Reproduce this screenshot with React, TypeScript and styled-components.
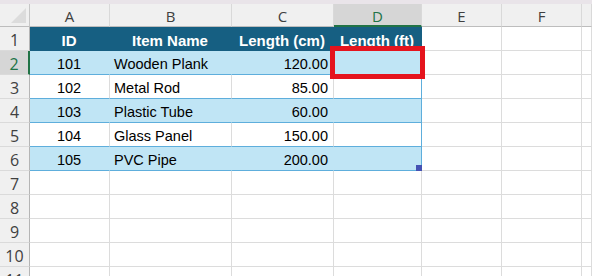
import React from 'react';
import styled, { createGlobalStyle, css } from 'styled-components';

const GlobalStyle = createGlobalStyle`
  html, body {
    margin: 0;
    padding: 0;
    background: #ffffff;
    overflow: hidden;
  }
  body {
    font-family: "Liberation Sans", Arial, sans-serif;
  }
`;

const TEAL = '#165f82';
const BAND = '#c0e5f5';
const LINE = '#5eaedc';
const GRID = '#dcdcdc';
const GREEN = '#217346';

const Page = styled.div`
  position: relative;
  width: 592px;
  height: 276px;
  overflow: hidden;
  background: #ffffff;
`;

const TopStrip = styled.div`
  height: 4px;
  background: #e9e4e9;
`;

const Sheet = styled.div`
  display: grid;
  grid-template-columns: 30px 80px 122px 102px 88px 80px 80px 10px;
  grid-template-rows: 23px;
  grid-auto-rows: 24px;
`;

const Corner = styled.div`
  position: relative;
  background: #f0f0f0;
  border-right: 1px solid #c6c6c6;
  border-bottom: 1px solid #bdbdbd;

  &::after {
    content: '';
    position: absolute;
    right: 3px;
    bottom: 3px;
    width: 0;
    height: 0;
    border-left: 15px solid transparent;
    border-bottom: 15px solid #dcdcdc;
  }
`;

const ColHead = styled.div<{ $selected?: boolean }>`
  display: flex;
  align-items: center;
  justify-content: center;
  padding-top: 2px;
  box-sizing: border-box;
  font-family: "Open Sans", "Liberation Sans", sans-serif;
  font-size: 15px;
  color: #404040;
  background: #f0f0f0;
  border-right: 1px solid #d9d9d9;
  border-bottom: 1px solid #bdbdbd;
  ${(p) =>
    p.$selected &&
    css`
      background: #d6d6d6;
      color: ${GREEN};
      border-bottom: 2px solid ${GREEN};
    `}
`;

const RowHead = styled.div<{ $selected?: boolean }>`
  display: flex;
  align-items: center;
  justify-content: center;
  padding-top: 3px;
  box-sizing: border-box;
  font-family: "Open Sans", "Liberation Sans", sans-serif;
  font-size: 16px;
  color: #404040;
  background: #f0f0f0;
  border-right: 1px solid #b5b5b5;
  border-bottom: 1px solid #dadada;
  ${(p) =>
    p.$selected &&
    css`
      background: #d6d6d6;
      color: ${GREEN};
      border-right: 2px solid ${GREEN};
    `}
`;

type Kind = 'empty' | 'head' | 'band' | 'plain';
type Align = 'left' | 'center' | 'right';

const Cell = styled.div<{ $kind: Kind; $align: Align; $edge?: boolean }>`
  display: flex;
  align-items: center;
  padding: 3px 5px 0 4px;
  box-sizing: border-box;
  font-size: 14.5px;
  color: #000000;
  white-space: nowrap;
  overflow: hidden;
  justify-content: ${(p) =>
    p.$align === 'left' ? 'flex-start' : p.$align === 'right' ? 'flex-end' : 'center'};
  background: #ffffff;
  border-right: 1px solid ${GRID};
  border-bottom: 1px solid ${GRID};

  ${(p) =>
    p.$kind === 'head' &&
    css`
      background: ${TEAL};
      color: #ffffff;
      font-weight: bold;
      font-size: 15px;
      border-right-color: ${TEAL};
      border-bottom-color: ${TEAL};
    `}
  ${(p) =>
    p.$kind === 'band' &&
    css`
      background: ${BAND};
      border-right-color: ${BAND};
      border-bottom-color: ${LINE};
    `}
  ${(p) =>
    p.$kind === 'plain' &&
    css`
      border-bottom-color: ${LINE};
    `}
  ${(p) =>
    p.$edge &&
    p.$kind !== 'empty' &&
    css`
      border-right-color: ${p.$kind === 'head' ? TEAL : LINE};
    `}
`;

const RedBox = styled.div`
  position: absolute;
  left: 330px;
  top: 46px;
  width: 95px;
  height: 33px;
  box-sizing: border-box;
  border: 5px solid #e5141d;
`;

const FillHandle = styled.div`
  position: absolute;
  left: 416px;
  top: 165px;
  width: 6px;
  height: 6px;
  background: #4552b3;
`;

const columns = ['A', 'B', 'C', 'D', 'E', 'F', ''];
const aligns: Align[] = ['center', 'left', 'right', 'center'];

const tableRows: string[][] = [
  ['ID', 'Item Name', 'Length (cm)', 'Length (ft)'],
  ['101', 'Wooden Plank', '120.00', ''],
  ['102', 'Metal Rod', '85.00', ''],
  ['103', 'Plastic Tube', '60.00', ''],
  ['104', 'Glass Panel', '150.00', ''],
  ['105', 'PVC Pipe', '200.00', ''],
];

const TOTAL_ROWS = 11;

export default function App() {
  const rows = [];
  for (let r = 1; r <= TOTAL_ROWS; r++) {
    const data = tableRows[r - 1];
    const kind: Kind = !data ? 'empty' : r === 1 ? 'head' : r % 2 === 0 ? 'band' : 'plain';
    rows.push(
      <React.Fragment key={r}>
        <RowHead $selected={r === 2}>{r}</RowHead>
        {columns.map((_, c) => {
          const inTable = data && c < 4;
          return (
            <Cell
              key={c}
              $kind={inTable ? kind : 'empty'}
              $align={r === 1 ? 'center' : aligns[c] ?? 'left'}
              $edge={c === 3}
            >
              {inTable ? data[c] : ''}
            </Cell>
          );
        })}
      </React.Fragment>
    );
  }

  return (
    <Page>
      <GlobalStyle />
      <TopStrip />
      <Sheet>
        <Corner />
        {columns.map((col, i) => (
          <ColHead key={i} $selected={col === 'D'}>
            {col}
          </ColHead>
        ))}
        {rows}
      </Sheet>
      <RedBox />
      <FillHandle />
    </Page>
  );
}
